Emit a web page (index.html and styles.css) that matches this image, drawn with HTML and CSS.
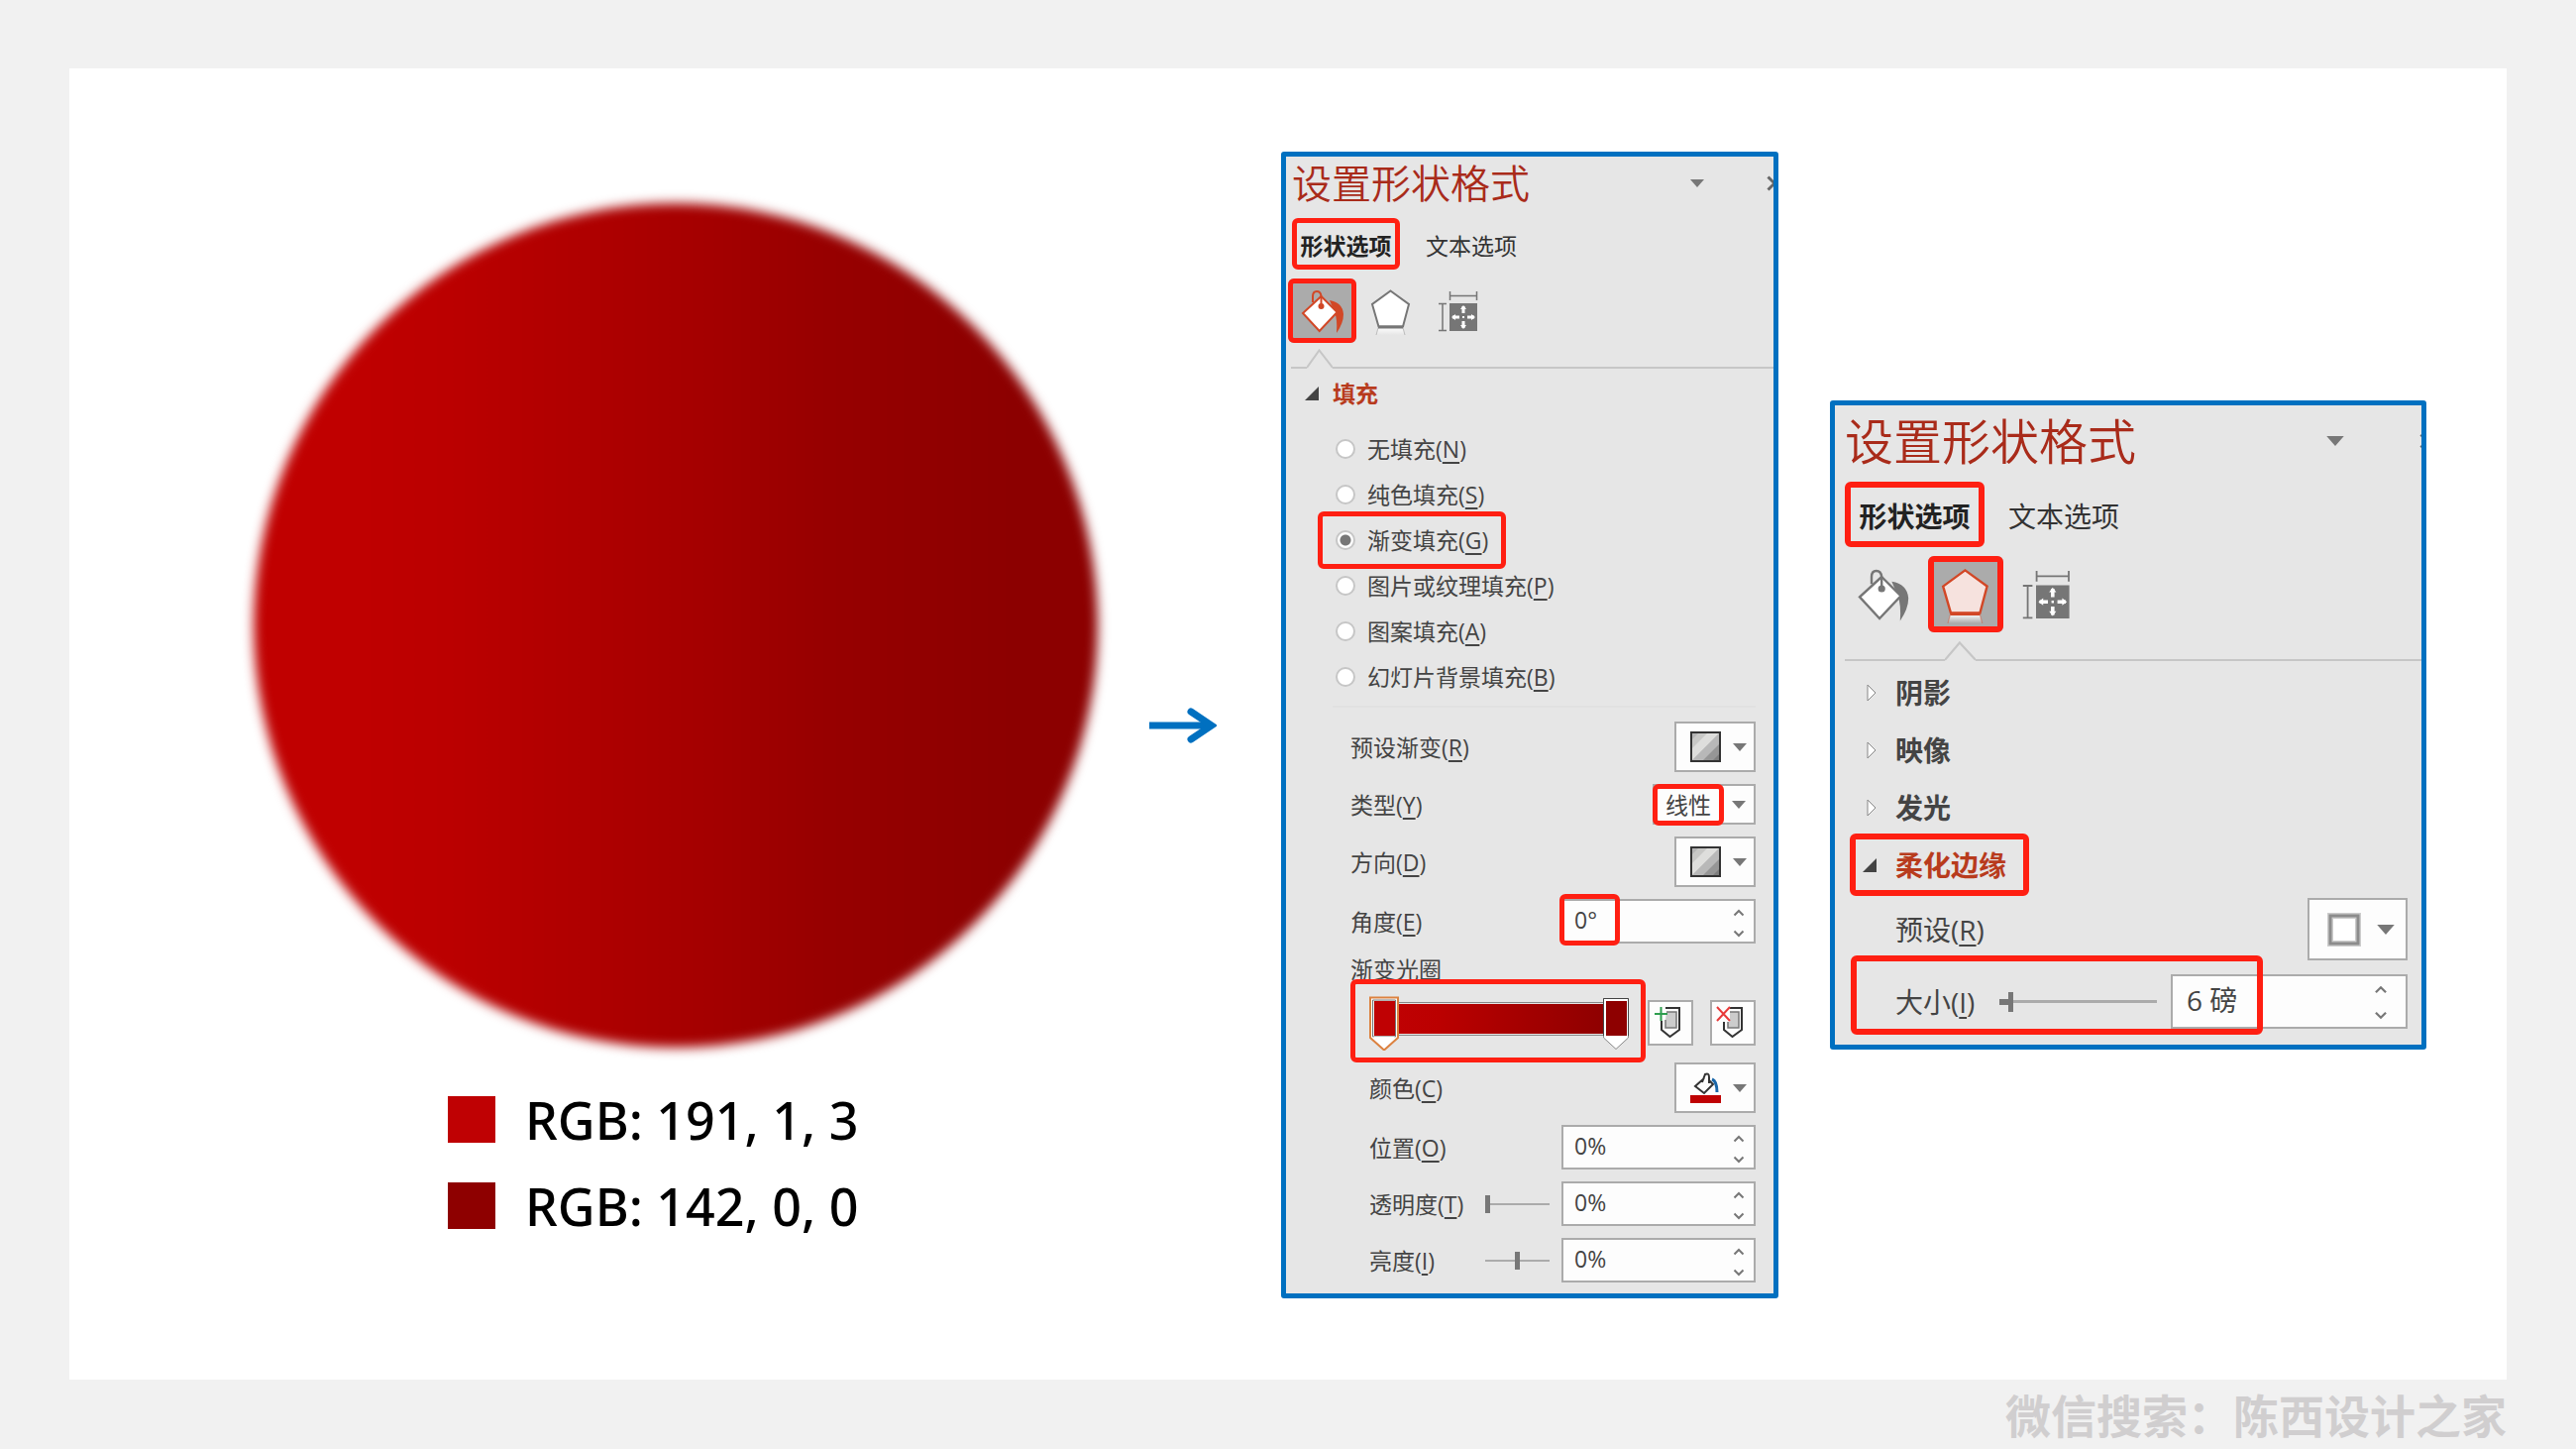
FILE: index.html
```html
<!DOCTYPE html>
<html lang="zh-CN">
<head>
  <meta charset="UTF-8">
  <meta name="viewport" content="width=device-width, initial-scale=1">
  <title>设置形状格式</title>
  <link rel="stylesheet" href="styles.css">
</head>
<body>

<!-- shared icons -->
<svg class="sprite" aria-hidden="true">
  <defs>
    <linearGradient id="fade" x1="0" y1="0" x2="0" y2="1">
      <stop offset="0" stop-color="#fff" stop-opacity="0.9"/>
      <stop offset="1" stop-color="#fff" stop-opacity="0"/>
    </linearGradient>
    <linearGradient id="redBar">
      <stop offset="0" stop-color="#bf0103"/>
      <stop offset="0.2" stop-color="#bb0000"/>
      <stop offset="1" stop-color="#8e0000"/>
    </linearGradient>
    <symbol id="bucket" viewBox="0 0 60 60">
      <path d="M37 19Q50 21 51 33Q51 42 44 52Q45 38 42 31Z" fill="currentColor"/>
      <path d="M28.500 15L44.600 31L26.700 50L10 32Z" fill="#fff" stroke="currentColor" stroke-width="2"/>
      <path d="M20 21V15Q20 10 24 10Q28 10 28.500 15V25" fill="none" stroke="currentColor" stroke-width="2"/>
      <circle cx="28.500" cy="25" r="3" fill="currentColor"/>
    </symbol>
    <symbol id="pentagon" viewBox="0 0 60 60">
      <path d="M17 47H42L44 54H15Z" fill="url(#fade)"/>
      <path class="pentagon-shape" d="M29.500 9.500L48 23L42 45.500H17.500L11 23Z" stroke="currentColor" stroke-width="2"/>
      <path d="M17 46H42" stroke="currentColor" stroke-width="3"/>
      <path d="M17 47L15 54M42 47L44 54" stroke="currentColor" stroke-width="1" opacity="0.4"/>
    </symbol>
    <symbol id="size" viewBox="0 0 60 60">
      <path d="M20.500 10V19M47.500 10V19M20.500 14.500H47.500M9 22.500H17M9 49.500H17M13 22.500V49.500" fill="none" stroke="#767676" stroke-width="1.500"/>
      <path d="M20 22H48V50H20Z" fill="#767676"/>
      <path d="M34 25V32M34 40V47M23 36H30M38 36H45" stroke="#fff" stroke-width="3"/>
      <path d="M31 28L34 24L37 28ZM31 44L34 48L37 44ZM26 33L22 36L26 39ZM42 33L46 36L42 39ZM33 35H35V37H33Z" fill="#fff"/>
    </symbol>
    <symbol id="down" viewBox="0 0 14 8">
      <path d="M0 0H14L7 8Z" fill="#777"/>
    </symbol>
    <symbol id="close" viewBox="0 0 16 16">
      <path d="M1.500 1.500L14.500 14.500M14.500 1.500L1.500 14.500" stroke="#666" stroke-width="3"/>
    </symbol>
    <symbol id="chevUp" viewBox="0 0 12 8">
      <path d="M1.500 6.500L6 2L10.500 6.500" fill="none" stroke="#777" stroke-width="2"/>
    </symbol>
    <symbol id="chevDown" viewBox="0 0 12 8">
      <path d="M1.500 1.500L6 6L10.500 1.500" fill="none" stroke="#777" stroke-width="2"/>
    </symbol>
    <symbol id="open" viewBox="0 0 14 14">
      <path d="M14 0V14H0Z" fill="#444"/>
    </symbol>
    <symbol id="closed" viewBox="0 0 10 18">
      <path d="M1 1L9 9L1 17Z" fill="#fff" stroke="#888"/>
    </symbol>
    <symbol id="preset" viewBox="0 0 31 31">
      <path d="M0 0H31V31H0Z" fill="#c8c8c6"/>
      <path d="M0 0H10L0 10Z" fill="#b4b4b4"/>
      <path d="M19 0H31L0 31V19Z" fill="#dededc"/>
      <path d="M31 0V13L13 31H0Z" fill="#b8b8b8"/>
      <path d="M31 11V31H11Z" fill="#969696"/>
      <path d="M31 21V31H21Z" fill="#7e7e7e"/>
      <path d="M1 1H30V30H1Z" fill="none" stroke="#333" stroke-width="2"/>
    </symbol>
    <symbol id="stop" viewBox="0 0 46 46">
      <path d="M19 12H29V28H18V20" fill="#ccc" stroke="#777" stroke-width="1.500"/>
      <path d="M18 8H32V30L22.500 37L14 30V21" fill="none" stroke="#333" stroke-width="2"/>
    </symbol>
  </defs>
</svg>

<main class="slide">
  <section class="sample">
    <div class="circle"></div>
    <ul class="legend">
      <li><span class="swatch swatch-light"></span>RGB: 191, 1, 3</li>
      <li><span class="swatch swatch-dark"></span>RGB: 142, 0, 0</li>
    </ul>
  </section>

  <svg class="arrow" viewBox="0 0 68 36" aria-hidden="true">
    <path d="M0 18H60" stroke="#0070c0" stroke-width="7"/>
    <path d="M42 4L63 18L42 32" fill="none" stroke="#0070c0" stroke-width="7" stroke-linecap="round"/>
  </svg>

  <section class="panel">
    <header class="panel-head">
      <h2>设置形状格式</h2>
      <button class="plain" aria-label="选项"><svg class="down"><use href="#down"/></svg></button>
      <button class="plain close" aria-label="关闭"><svg><use href="#close"/></svg></button>
    </header>
    <div class="tabs" role="tablist">
      <button class="tab active mark" role="tab" aria-selected="true">形状选项</button>
      <button class="tab" role="tab" aria-selected="false">文本选项</button>
    </div>
    <div class="icons">
      <button class="icon active mark" aria-label="填充与线条"><svg><use href="#bucket"/></svg></button>
      <button class="icon" aria-label="效果"><svg><use href="#pentagon"/></svg></button>
      <button class="icon" aria-label="大小与属性"><svg><use href="#size"/></svg></button>
    </div>
    <div class="notch">
      <span class="notch-start"></span>
      <svg viewBox="0 0 26 20" preserveAspectRatio="none"><path d="M0 19L12.500 1.500L26 19" fill="none" stroke="#c6c6c6" stroke-width="2"/></svg>
      <span class="notch-end"></span>
    </div>

    <h3 class="group active"><svg class="tri-open"><use href="#open"/></svg>填充</h3>
    <div class="radios">
      <label><input type="radio" name="fill"><span>无填充(<u>N</u>)</span></label>
      <label><input type="radio" name="fill"><span>纯色填充(<u>S</u>)</span></label>
      <label class="mark mark-radio"><input type="radio" name="fill" checked><span>渐变填充(<u>G</u>)</span></label>
      <label><input type="radio" name="fill"><span>图片或纹理填充(<u>P</u>)</span></label>
      <label><input type="radio" name="fill"><span>图案填充(<u>A</u>)</span></label>
      <label><input type="radio" name="fill"><span>幻灯片背景填充(<u>B</u>)</span></label>
    </div>

    <div class="rows">
      <div class="row">
        <label for="preset1">预设渐变(<u>R</u>)</label>
        <button class="drop" id="preset1"><svg class="thumb"><use href="#preset"/></svg><svg class="down"><use href="#down"/></svg></button>
      </div>
      <div class="row">
        <label for="type">类型(<u>Y</u>)</label>
        <span class="select mark mark-type">
          <select id="type"><option>线性</option></select>
          <svg class="down"><use href="#down"/></svg>
        </span>
      </div>
      <div class="row">
        <label for="direction">方向(<u>D</u>)</label>
        <button class="drop" id="direction"><svg class="thumb"><use href="#preset"/></svg><svg class="down"><use href="#down"/></svg></button>
      </div>
      <div class="row">
        <label for="angle">角度(<u>E</u>)</label>
        <span class="spin mark mark-angle">
          <input type="text" id="angle" value="0°">
          <span class="spin-buttons">
            <button aria-label="增加"><svg><use href="#chevUp"/></svg></button>
            <button aria-label="减少"><svg><use href="#chevDown"/></svg></button>
          </span>
        </span>
      </div>
      <div class="row-title">渐变光圈</div>
      <div class="stops">
        <div class="stops-bar mark mark-stops">
          <svg viewBox="0 0 263 56">
            <path d="M28 7.500H238M28 40.500H238" stroke="#888"/>
            <path d="M28 9H238V39H28Z" fill="url(#redBar)"/>
            <path d="M1 2.500H29V43L15 55.500L1 43Z" fill="#fff" stroke="#dc8240" stroke-width="2"/>
            <path d="M3.500 5H26.500V42H3.500Z" fill="#eee" stroke="#777"/>
            <path d="M5 6H26V41H5Z" fill="#bf0103"/>
            <path d="M4 42H26L15 52Z" fill="#fff"/>
            <path d="M236.500 3.500H261.500V43L249 54.500L236.500 43Z" fill="#fff" stroke="#888"/>
            <path d="M236.500 41V3.500H261.500V41" fill="none" stroke="#444"/>
            <path d="M239 6H260V41H239Z" fill="#8e0000"/>
          </svg>
        </div>
        <button class="square" aria-label="添加渐变光圈">
          <svg viewBox="0 0 46 46"><use href="#stop"/><path d="M5 5H17V21H5Z" fill="#fdfdfd"/><path d="M7 14H20M13.500 7V21" stroke="#2e9e4f" stroke-width="2"/></svg>
        </button>
        <button class="square" aria-label="删除渐变光圈">
          <svg viewBox="0 0 46 46"><use href="#stop"/><path d="M5 5H20V22H5Z" fill="#fdfdfd"/><path d="M7 7L20 21M20 7L7 21" stroke="#e83a3a" stroke-width="2"/></svg>
        </button>
      </div>
      <div class="row sub">
        <label for="color">颜色(<u>C</u>)</label>
        <button class="drop" id="color">
          <svg class="thumb" viewBox="0 0 31 31">
            <path d="M22 7Q27 9 27 20" fill="none" stroke="#1a66a8" stroke-width="3"/>
            <path d="M14 6L5 14L14 21L23 12L19 8M12 10L15 2Q19 0 19 5V11" fill="none" stroke="#333" stroke-width="2"/>
            <path d="M0 23H31V31H0Z" fill="#bf0103"/>
          </svg>
          <svg class="down"><use href="#down"/></svg>
        </button>
      </div>
      <div class="row sub">
        <label for="position">位置(<u>O</u>)</label>
        <span class="spin">
          <input type="text" id="position" value="0%">
          <span class="spin-buttons">
            <button aria-label="增加"><svg><use href="#chevUp"/></svg></button>
            <button aria-label="减少"><svg><use href="#chevDown"/></svg></button>
          </span>
        </span>
      </div>
      <div class="row sub">
        <label for="alpha">透明度(<u>T</u>)</label>
        <input type="range" class="slider" aria-label="透明度" value="0">
        <span class="spin">
          <input type="text" id="alpha" value="0%">
          <span class="spin-buttons">
            <button aria-label="增加"><svg><use href="#chevUp"/></svg></button>
            <button aria-label="减少"><svg><use href="#chevDown"/></svg></button>
          </span>
        </span>
      </div>
      <div class="row sub">
        <label for="bright">亮度(<u>I</u>)</label>
        <input type="range" class="slider" aria-label="亮度" min="-100" max="100" value="0">
        <span class="spin">
          <input type="text" id="bright" value="0%">
          <span class="spin-buttons">
            <button aria-label="增加"><svg><use href="#chevUp"/></svg></button>
            <button aria-label="减少"><svg><use href="#chevDown"/></svg></button>
          </span>
        </span>
      </div>
    </div>
  </section>

  <section class="panel panel-large">
    <header class="panel-head">
      <h2>设置形状格式</h2>
      <button class="plain" aria-label="选项"><svg class="down"><use href="#down"/></svg></button>
      <button class="plain close" aria-label="关闭"><svg><use href="#close"/></svg></button>
    </header>
    <div class="tabs" role="tablist">
      <button class="tab active mark" role="tab" aria-selected="true">形状选项</button>
      <button class="tab" role="tab" aria-selected="false">文本选项</button>
    </div>
    <div class="icons">
      <button class="icon" aria-label="填充与线条"><svg><use href="#bucket"/></svg></button>
      <button class="icon active mark" aria-label="效果"><svg><use href="#pentagon"/></svg></button>
      <button class="icon" aria-label="大小与属性"><svg><use href="#size"/></svg></button>
    </div>
    <div class="notch">
      <span class="notch-start"></span>
      <svg viewBox="0 0 26 20" preserveAspectRatio="none"><path d="M0 19L12.500 1.500L26 19" fill="none" stroke="#c6c6c6" stroke-width="2"/></svg>
      <span class="notch-end"></span>
    </div>

    <h3 class="group"><svg class="tri-closed"><use href="#closed"/></svg>阴影</h3>
    <h3 class="group"><svg class="tri-closed"><use href="#closed"/></svg>映像</h3>
    <h3 class="group"><svg class="tri-closed"><use href="#closed"/></svg>发光</h3>
    <h3 class="group active mark mark-soft"><svg class="tri-open"><use href="#open"/></svg>柔化边缘</h3>

    <div class="rows">
      <div class="row">
        <label for="preset2">预设(<u>R</u>)</label>
        <button class="drop" id="preset2">
          <svg class="thumb" viewBox="0 0 34 34"><path d="M3 3H31V31H3Z" fill="#fff" stroke="#ccc" stroke-width="6"/><path d="M3 3H31V31H3Z" fill="none" stroke="#8c8c8c" stroke-width="3"/></svg>
          <svg class="down"><use href="#down"/></svg>
        </button>
      </div>
      <div class="row mark mark-size">
        <label for="size2">大小(<u>I</u>)</label>
        <input type="range" class="slider slider-long" aria-label="大小" value="6">
        <span class="spin">
          <input type="text" id="size2" value="6 磅">
          <span class="spin-buttons">
            <button aria-label="增加"><svg><use href="#chevUp"/></svg></button>
            <button aria-label="减少"><svg><use href="#chevDown"/></svg></button>
          </span>
        </span>
      </div>
    </div>
  </section>
</main>

<footer class="credit">微信搜索：陈西设计之家</footer>

</body>
</html>
```
FILE: styles.css
```css
*,
*::after {
  box-sizing: border-box;
}

body {
  margin: 0;
  min-height: 100vh;
  padding: 69px 70px 0;
  background: #f1f1f1;
  color: #444;
  font-family: "Open Sans", "Noto Sans CJK SC", sans-serif;
  display: flex;
  flex-direction: column;
}

h2, h3, ul {
  margin: 0;
  padding: 0;
}

button, input, select {
  margin: 0;
  padding: 0;
  border: none;
  border-radius: 0;
  background: none;
  color: inherit;
  font: inherit;
}

svg {
  display: block;
  flex: none;
}

u {
  text-underline-offset: 4px;
  text-decoration-thickness: 2px;
}

.sprite {
  position: absolute;
  width: 0;
  height: 0;
}

.slide {
  flex: 1;
  background: #fff;
  display: grid;
  grid-template-columns: 852fr 81fr 502fr 602fr;
  gap: 52px;
  align-items: center;
  padding: 2px 81px 0 186px;
}

/* circle and its two colours */
.sample {
  padding-bottom: 18px;
}

.circle {
  aspect-ratio: 1;
  border-radius: 50%;
  background: linear-gradient(to right, #c00000 10%, #bb0000 23%, #a40000 54%, #970000 68%, #8c0000 90%);
  filter: blur(6px);
}

.legend {
  list-style: none;
  margin: 49px 0 0 196px;
  color: #000;
  font-family: "Noto Sans", sans-serif;
  font-size: 52px;
  font-weight: 500;
  line-height: 47px;
  display: flex;
  flex-direction: column;
  gap: 40px;
}

.legend li {
  display: flex;
  align-items: center;
  gap: 30px;
}

.swatch {
  width: 48px;
  height: 47px;
}

.swatch-light {
  background: #bf0103;
}

.swatch-dark {
  background: #8e0000;
}

.arrow {
  width: 68px;
  height: 36px;
}

/* format panel */
.panel {
  --text: 23px;
  --title: 40px;
  --head: 54px;
  --edge: 6px;
  --tab-top: 8px;
  --tab-w: 109px;
  --tab-h: 52px;
  --tab-gap: 26px;
  --icon-w: 69px;
  --icon-h: 65px;
  --icon-edge: 2px;
  --icon-gap: 0px;
  --icon: 60px;
  --notch-top: 6px;
  --notch-start: 16px;
  --notch-w: 26px;
  --group-h: 50px;
  --down-w: 14px;
  --down-h: 8px;
  --drop-w: 82px;
  --drop-h: 51px;
  --thumb: 31px;
  --spin-w: 196px;
  --spin-h: 45px;
  border: 5px solid #0070c0;
  border-radius: 3px;
  background: #e6e6e6;
  font-size: var(--text);
  line-height: 32px;
  overflow: hidden;
}

.panel-large {
  --text: 28px;
  --title: 49px;
  --head: 72px;
  --edge: 10px;
  --tab-top: 5px;
  --tab-w: 141px;
  --tab-h: 66px;
  --tab-gap: 24px;
  --icon-w: 76px;
  --icon-h: 77px;
  --icon-edge: 11px;
  --icon-gap: 7px;
  --icon: 72px;
  --notch-top: 9px;
  --notch-start: 101px;
  --notch-w: 31px;
  --group-h: 58px;
  --down-w: 18px;
  --down-h: 10px;
  --drop-w: 101px;
  --drop-h: 63px;
  --thumb: 34px;
  --spin-w: 239px;
  --spin-h: 55px;
}

/* red frame drawn over a control */
.mark {
  position: relative;
}

.mark::after {
  content: "";
  position: absolute;
  inset: 0;
  border: 5px solid #ff1f12;
  border-radius: 6px;
  pointer-events: none;
}

.panel-large .mark::after {
  border-width: 6px;
}

.panel-head {
  height: var(--head);
  padding-left: var(--edge);
  display: flex;
  align-items: center;
}

.panel-head h2 {
  flex: 1;
  color: #a92b1a;
  font-size: var(--title);
  font-weight: 350;
  line-height: var(--head);
  white-space: nowrap;
}

.down {
  width: var(--down-w);
  height: var(--down-h);
}

.close {
  width: 7px;
  margin-left: 63px;
  overflow: hidden;
}

.close svg {
  width: 16px;
  height: 16px;
}

.panel-large .close {
  width: 2px;
  margin-left: 76px;
}

.tabs {
  margin-top: var(--tab-top);
  padding-left: var(--edge);
  display: flex;
  gap: var(--tab-gap);
  color: #333;
}

.tab {
  height: var(--tab-h);
  padding-top: 4px;
  white-space: nowrap;
}

.tab.active {
  width: var(--tab-w);
  color: #222;
  font-weight: 700;
}

.icons {
  margin-top: 9px;
  padding-left: var(--icon-edge);
  display: flex;
  gap: var(--icon-gap);
}

.icon {
  width: var(--icon-w);
  height: var(--icon-h);
  color: #767676;
  display: flex;
  align-items: center;
  justify-content: center;
}

.icon svg {
  width: var(--icon);
  height: var(--icon);
}

.icon.active {
  --pentagon: #f6e2de;
  border-radius: 6px;
  background: #ababab;
  color: #d24726;
}

.pentagon-shape {
  fill: var(--pentagon, #fff);
}

.notch {
  margin-top: var(--notch-top);
  padding-left: 5px;
  display: flex;
  align-items: flex-end;
}

.panel-large .notch {
  padding-left: 10px;
}

.notch svg {
  width: var(--notch-w);
  height: 20px;
}

.notch-start {
  width: var(--notch-start);
  border-bottom: 2px solid #c6c6c6;
}

.notch-end {
  flex: 1;
  border-bottom: 2px solid #c6c6c6;
}

.group {
  height: var(--group-h);
  padding-left: 19px;
  font-size: var(--text);
  font-weight: 700;
  display: flex;
  align-items: center;
  gap: 14px;
}

.group.active {
  color: #b83b1d;
}

.tri-open {
  width: 14px;
  height: 14px;
}

.tri-closed {
  width: 10px;
  height: 18px;
}

.panel-large .group {
  padding-left: 32px;
  gap: 19px;
}

.panel-large .group.active {
  padding-left: 28px;
}

.panel-large .notch + .group {
  margin-top: 3px;
}

.mark-soft::after {
  inset: -3px auto -2px 15px;
  width: 181px;
}

/* fill choices */
.radios {
  margin: 8px 18px 0 47px;
  padding-bottom: 6px;
  border-bottom: 2px solid #e1e1e1;
}

.radios label {
  height: 46px;
  width: fit-content;
  padding-left: 3px;
  display: flex;
  align-items: center;
  gap: 12px;
}

.radios input {
  appearance: none;
  width: 20px;
  height: 20px;
  border: 2px solid #c6c6c6;
  border-radius: 50%;
  background: #fff;
}

.radios input:checked {
  background: radial-gradient(circle, #777 5px, #fff 6px);
}

.mark-radio::after {
  inset: -6px -18px -6px -15px;
}

/* settings rows */
.rows {
  padding: 14px 18px 11px 65px;
  display: flex;
  flex-direction: column;
  gap: 12px;
}

.panel-large .rows {
  padding: 4px 14px 16px 61px;
  gap: 14px;
}

.row {
  display: flex;
  align-items: center;
  justify-content: flex-end;
}

.row label {
  flex: 1;
  white-space: nowrap;
}

.row.sub {
  padding-left: 19px;
}

.drop {
  width: var(--drop-w);
  height: var(--drop-h);
  border: 2px solid #ababab;
  background: #fdfdfd;
  display: flex;
  align-items: center;
  justify-content: center;
  gap: 12px;
}

.panel-large .drop {
  gap: 16px;
}

.thumb {
  width: var(--thumb);
  height: var(--thumb);
}

.drop .down {
  margin-right: -6px;
}

.select {
  height: 41px;
  border: 2px solid #ababab;
  background: #fdfdfd;
  display: flex;
  align-items: center;
  padding-right: 8px;
}

.select select {
  appearance: none;
  width: 78px;
  height: 37px;
  padding-left: 11px;
}

.mark-type::after {
  inset: -2px 30px -3px -2px;
}

.spin {
  width: var(--spin-w);
  height: var(--spin-h);
  border: 2px solid #ababab;
  background: #fdfdfd;
  display: flex;
}

.spin input {
  flex: 1;
  min-width: 0;
  padding: 0 0 3px 11px;
}

.panel-large .spin input {
  padding-left: 14px;
}

.spin-buttons {
  width: 32px;
  display: flex;
  flex-direction: column;
  justify-content: space-between;
  padding: 8px 0 4px;
}

.spin-buttons button {
  padding-left: 11px;
}

.spin-buttons svg {
  width: 12px;
  height: 8px;
}

.panel-large .spin-buttons {
  padding: 9px 0 7px;
}

.panel-large .spin-buttons button {
  padding-left: 0;
}

.panel-large .spin-buttons svg {
  width: 14px;
  height: 9px;
}

.mark-angle::after {
  inset: -7px auto -4px -4px;
  width: 61px;
}

.row-title {
  line-height: 28px;
}

.stops {
  height: 56px;
  padding-left: 19px;
  display: flex;
  align-items: center;
  justify-content: space-between;
}

.stops-bar {
  width: 263px;
}

.mark-stops::after {
  inset: -16px -16px -12px -19px;
}

.square {
  width: 46px;
  height: 46px;
  border: 2px solid #ababab;
  background: #fdfdfd;
}

.square svg {
  width: 46px;
  height: 46px;
  margin: -2px;
}

.slider {
  appearance: none;
  width: 65px;
  height: 20px;
  margin-right: 12px;
}

.slider::-webkit-slider-runnable-track {
  height: 20px;
  background: linear-gradient(#ababab, #ababab) center / 100% 2px no-repeat;
}

.slider::-webkit-slider-thumb {
  appearance: none;
  width: 5px;
  height: 18px;
  margin-top: 1px;
  background: #777;
}

.slider-long {
  width: 159px;
  margin-right: 14px;
}

.slider-long::-webkit-slider-runnable-track {
  background:
    linear-gradient(#777, #777) left / 10px 6px no-repeat,
    linear-gradient(#ababab, #ababab) center / 100% 3px no-repeat;
}

.slider-long::-webkit-slider-thumb {
  height: 20px;
  margin-top: 0;
}

.mark-size::after {
  inset: -19px auto -6px -45px;
  width: 416px;
}

.credit {
  height: 70px;
  color: #d0cecf;
  font-size: 46px;
  font-weight: 700;
  line-height: 72px;
  text-align: right;
}
```
